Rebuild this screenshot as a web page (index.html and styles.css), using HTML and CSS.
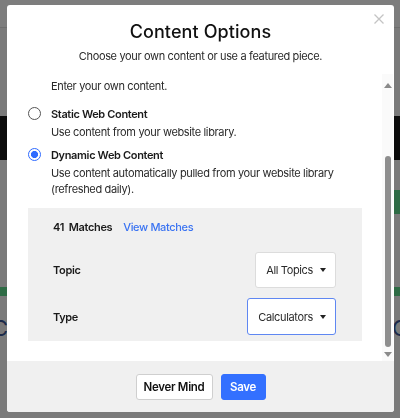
FILE: index.html
```html
<!DOCTYPE html>
<html lang="en">
<head>
<meta charset="utf-8">
<title>Content Options</title>
<link rel="stylesheet" href="styles.css">
</head>
<body>
<div class="page">
  <div class="page-header"></div>
  <div class="page-gap1"></div>
  <div class="page-band"></div>
  <div class="page-row1"><span class="green-right"></span></div>
  <div class="page-row2"><span class="green-left"></span><span class="green-right2"></span></div>
  <div class="page-row3"><span class="big-c">C</span><span class="big-c">C</span></div>
</div>

<div class="modal" role="dialog" aria-labelledby="modal-title">
  <button class="close" aria-label="Close">
    <svg width="10" height="10" viewBox="0 0 10 10"><path d="M0.5 0.5L9.5 9.5M9.5 0.5L0.5 9.5" stroke="#c4c4c4" stroke-width="1.3" fill="none"/></svg>
  </button>
  <div class="modal-head">
    <h1 id="modal-title" class="title">Content Options</h1>
    <p class="subtitle">Choose your own content or use a featured piece.</p>
  </div>
  <div class="modal-body">
    <div class="scroll-content">
      <p class="intro">Enter your own content.</p>
      <div class="option">
        <span class="radio"></span>
        <div class="option-text">
          <div class="option-title">Static Web Content</div>
          <div class="option-desc">Use content from your website library.</div>
        </div>
      </div>
      <div class="option">
        <span class="radio checked"></span>
        <div class="option-text">
          <div class="option-title">Dynamic Web Content</div>
          <div class="option-desc">Use content automatically pulled from your website library (refreshed daily).</div>
        </div>
      </div>
      <div class="filters">
        <div class="matches"><span class="count">41&nbsp; Matches</span><a class="view" href="#">View Matches</a></div>
        <div class="filter-row topic">
          <span class="filter-label">Topic</span>
          <span class="select">All Topics<span class="caret"></span></span>
        </div>
        <div class="filter-row type">
          <span class="filter-label">Type</span>
          <span class="select focused">Calculators<span class="caret"></span></span>
        </div>
      </div>
    </div>
    <div class="scrollbar">
      <span class="arrow up"></span>
      <div class="track"><div class="thumb"></div></div>
      <span class="arrow down"></span>
    </div>
  </div>
  <div class="modal-foot">
    <button class="btn secondary">Never Mind</button>
    <button class="btn primary">Save</button>
  </div>
</div>
</body>
</html>
```

FILE: styles.css
```css
* { box-sizing: border-box; }
html, body { margin: 0; padding: 0; }
body {
  width: 400px;
  height: 418px;
  overflow: hidden;
  background: #7a7a7a;
  font-family: Inter, "Noto Sans", sans-serif;
  color: #1f1f1f;
}

/* backdrop page (dimmed) */
.page { width: 400px; }
.page-header { height: 28px; background: #7d7d7d; border-bottom: 1px solid #6e6e6e; }
.page-gap1 { height: 88px; }
.page-band { height: 44px; background: #0c0c0c; }
.page-row1 { height: 127px; display: flex; justify-content: flex-end; padding-top: 30px; }
.green-right { display: block; width: 6px; height: 24px; background: #2e6b45; }
.page-row2 { height: 12px; display: flex; justify-content: space-between; }
.green-left, .green-right2 { display: block; width: 8px; height: 9px; background: #2e6b45; }
.page-row3 { display: flex; justify-content: space-between; padding-top: 18px; }
.big-c { font-size: 22px; color: #1c2a4a; line-height: 22px; margin: 0 -8px; }

/* modal */
.modal {
  position: fixed;
  left: 7px;
  top: 5px;
  width: 387px;
  height: 407px;
  background: #fff;
  border-radius: 3px;
  display: flex;
  flex-direction: column;
  overflow: hidden;
  letter-spacing: -0.35px;
}
.close {
  position: absolute;
  top: 9px;
  right: 10px;
  width: 10px;
  height: 10px;
  padding: 0;
  border: 0;
  background: none;
  display: flex;
}
.modal-head { text-align: center; padding-top: 16px; height: 69px; }
.title { margin: 0; font-size: 18px; line-height: 22px; font-weight: 500; color: #111; letter-spacing: 0.1px; }
.subtitle { margin: 6px 0 0; font-size: 11px; line-height: 14px; color: #2a2a2a; }

.modal-body { display: flex; flex: 1; min-height: 0; }
.scroll-content { flex: 1; padding: 4px 0 0 21px; }
.intro { margin: 0 0 0 23px; font-size: 11px; line-height: 16px; color: #2a2a2a; }

.option { display: flex; align-items: flex-start; margin-top: 12px; }
.option + .option { margin-top: 7px; }
.radio {
  width: 13px; height: 13px;
  border: 1.5px solid #555;
  border-radius: 50%;
  margin-top: 1px;
  flex: none;
}
.radio.checked {
  border-color: #2f6bff;
  background: radial-gradient(circle, #2f6bff 0 3.3px, #fff 3.8px);
}
.option-text { margin-left: 10px; }
.option-title { font-size: 11px; line-height: 16px; font-weight: 600; color: #1a1a1a; }
.option-desc { font-size: 11px; line-height: 16px; color: #2a2a2a; margin-top: 2px; width: 300px; }

.filters {
  margin-top: 11px;
  width: 334px;
  height: 133px;
  background: #f0f0f0;
  padding: 11px 26px 0 25px;
}
.matches { display: flex; align-items: center; height: 16px; font-size: 11px; }
.count { font-weight: 600; color: #1a1a1a; }
.view { margin-left: 11px; color: #3a73f2; font-weight: 500; text-decoration: none; }
.filter-row { display: flex; align-items: center; justify-content: space-between; }
.filter-row.topic { margin-top: 17px; }
.filter-row.type { margin-top: 10px; }
.filter-label { font-size: 11px; font-weight: 600; color: #1a1a1a; }
.select {
  display: flex;
  align-items: center;
  height: 36px;
  padding: 0 9px 0 10px;
  background: #fff;
  border: 1px solid #dcdcdc;
  border-radius: 3px;
  font-size: 11px;
  color: #2a2a2a;
}
.select.focused { border: 1.5px solid #5f87f2; height: 37px; }
.caret {
  width: 0; height: 0;
  border-left: 3.5px solid transparent;
  border-right: 3.5px solid transparent;
  border-top: 4px solid #222;
  margin-left: 7px;
}

.scrollbar {
  width: 11px;
  margin-right: 1px;
  display: flex;
  flex-direction: column;
  align-items: center;
  background: #fafafa;
}
.arrow { width: 0; height: 0; border-left: 4px solid transparent; border-right: 4px solid transparent; flex: none; }
.arrow.up { border-bottom: 5px solid #8a8a8a; margin-top: 9px; }
.arrow.down { border-top: 5px solid #8a8a8a; margin-bottom: 4px; }
.track { flex: 1; width: 100%; display: flex; justify-content: center; padding: 68px 0 5px; }
.thumb { width: 6px; height: 100%; background: #8e8e8e; border-radius: 3px; }

.modal-foot {
  height: 51px;
  flex: none;
  background: #f0f0f0;
  display: flex;
  justify-content: center;
  align-items: flex-start;
  gap: 8px;
  padding-top: 13px;
}
.btn {
  height: 26px;
  border-radius: 3px;
  font-family: inherit;
  font-size: 11.5px;
  font-weight: 600;
  letter-spacing: -0.3px;
  padding: 0;
}
.btn.secondary { width: 77px; background: #fff; border: 1px solid #cfcfcf; color: #111; }
.btn.primary { width: 45px; background: #3370ff; border: 1px solid #3370ff; color: #fff; }
```
